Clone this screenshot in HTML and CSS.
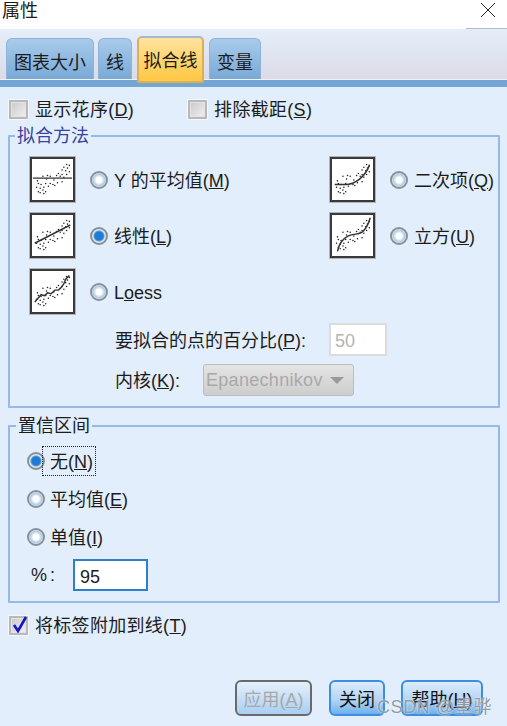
FILE: index.html
```html
<!DOCTYPE html>
<html lang="zh-CN">
<head>
    <meta charset="UTF-8">
    <meta name="viewport" content="width=device-width, initial-scale=1.0">
    <title>属性</title>
    <link rel="stylesheet" href="styles.css">
</head>
<body>
    <svg class="defs" width="0" height="0">
        <defs>
            <path id="dots" d="M38 6h0M41 7h0M35 9h0M39 10h0M33 12h0M37 13h0M41 14h0M29 16h0M33 17h0M38 17h0M12 19h0M17 18h0M20 19h0M27 18h0M31 19h0M35 20h0M7 27h0M10 28h0M15 27h0M20 27h0M23 28h0M28 26h0M33 25h0M5 31h0M9 32h0M13 31h0M18 30h0M25 29h0M7 36h0M12 34h0M15 36h0M9 37h0M13 38h0M6 24h0M16 22h0M24 23h0"/>
        </defs>
    </svg>
    <div class="dialog">
        <div class="titlebar">
            <span class="title">属性</span>
            <svg class="close" width="16" height="16" viewBox="0 0 16 16"><path d="M1 1L15 15M15 1L1 15"/></svg>
        </div>
        <div class="tabs">
            <div class="tab">图表大小</div>
            <div class="tab">线</div>
            <div class="tab active">拟合线</div>
            <div class="tab">变量</div>
        </div>
        <div class="panel">
            <div class="checks">
                <label class="check-item"><span class="checkbox"></span><span>显示花序(<u>D</u>)</span></label>
                <label class="check-item"><span class="checkbox"></span><span>排除截距(<u>S</u>)</span></label>
            </div>

            <fieldset class="group">
                <legend class="blue">拟合方法</legend>
                <div class="methods">
                    <div class="method">
                        <svg class="thumb" viewBox="0 0 45 45"><use href="#dots"/><path class="fit" d="M1 21H44"/></svg>
                        <span class="radio"></span><span class="method-text">Y 的平均值(<u>M</u>)</span>
                    </div>
                    <div class="method">
                        <svg class="thumb" viewBox="0 0 45 45"><use href="#dots"/><path class="fit" d="M3 28H15C25 28 36 20 41 7"/></svg>
                        <span class="radio"></span><span class="method-text">二次项(<u>Q</u>)</span>
                    </div>
                    <div class="method">
                        <svg class="thumb" viewBox="0 0 45 45"><use href="#dots"/><path class="fit" d="M3 31L42 11"/></svg>
                        <span class="radio on"></span><span class="method-text">线性(<u>L</u>)</span>
                    </div>
                    <div class="method">
                        <svg class="thumb" viewBox="0 0 45 45"><use href="#dots"/><path class="fit" d="M6 40C8 30 12 26 18 23S30 22 34 18S40 10 42 3"/></svg>
                        <span class="radio"></span><span class="method-text">立方(<u>U</u>)</span>
                    </div>
                    <div class="method">
                        <svg class="thumb" viewBox="0 0 45 45"><use href="#dots"/><path class="fit" d="M3 34L10 26L14 27L17 24L21 25L25 21L29 21L32 18L35 14L37 9L41 5"/></svg>
                        <span class="radio"></span><span class="method-text">L<u>o</u>ess</span>
                    </div>
                </div>
                <div class="param">
                    <span class="param-label wide">要拟合的点的百分比(<u>P</u>):</span>
                    <span class="field disabled">50</span>
                </div>
                <div class="param">
                    <span class="param-label">内核(<u>K</u>):</span>
                    <span class="select">Epanechnikov<i class="arrow"></i></span>
                </div>
            </fieldset>

            <fieldset class="group second">
                <legend>置信区间</legend>
                <div class="option"><span class="radio on"></span><span class="option-text focused">无(<u>N</u>)</span></div>
                <div class="option"><span class="radio"></span><span class="option-text">平均值(<u>E</u>)</span></div>
                <div class="option"><span class="radio"></span><span class="option-text">单值(<u>I</u>)</span></div>
                <div class="percent">
                    <span class="percent-label">%:</span>
                    <span class="field">95</span>
                </div>
            </fieldset>

            <label class="check-item attach"><span class="checkbox checked"><svg width="17" height="17" viewBox="0 0 17 17"><path d="M3 9L7 15L15 1"/></svg></span><span>将标签附加到线(<u>T</u>)</span></label>

            <div class="actions">
                <button class="btn apply">应用(<u>A</u>)</button>
                <button class="btn close-btn">关闭</button>
                <button class="btn help">帮助(<u>H</u>)</button>
            </div>
        </div>
        <div class="watermark">CSDN @墨骅</div>
    </div>
</body>
</html>
```

FILE: styles.css
```css
* {
    box-sizing: border-box;
}
body {
    margin: 0;
    font-family: "Liberation Sans", "Noto Sans CJK SC", sans-serif;
    font-size: 18px;
    line-height: 20px;
    color: #1c1c1c;
    background: #e2eefb;
}
.defs {
    position: absolute;
}
.dialog {
    position: relative;
    width: 507px;
    height: 726px;
    display: flex;
    flex-direction: column;
    overflow: hidden;
}
.titlebar {
    position: relative;
    height: 29px;
    flex: none;
    padding: 0 11px 0 2px;
    background: #fff;
    display: flex;
    justify-content: space-between;
    align-items: flex-start;
}
.titlebar::after {
    content: "";
    position: absolute;
    right: 0;
    bottom: 0;
    width: 41px;
    height: 1px;
    background: #b4bcc8;
}
.title {
    line-height: 22px;
}
.close {
    margin-top: 2px;
}
.close path {
    fill: none;
    stroke: #222;
    stroke-width: 1;
}
.tabs {
    height: 58px;
    flex: none;
    display: flex;
    gap: 4px;
    padding-left: 6px;
    border-bottom: 7px solid #75a5d2;
    background: linear-gradient(#e4eefa, #dbdbe7);
    box-shadow: inset 0 -1px 0 #f2f2f6;
}
.tab {
    height: 41px;
    margin-top: 9px;
    padding: 14px 7px 0;
    border: 1px solid #8db3da;
    border-bottom: none;
    border-radius: 6px 6px 0 0;
    background: linear-gradient(#a9cbea, #78a9d6);
}
.tab.active {
    height: 47px;
    margin: 7px 1px 0;
    padding: 13px 4.5px 0;
    border: 2px solid #d9b054;
    border-top-color: #a7b9c9;
    border-radius: 5px 5px 2px 2px;
    background: linear-gradient(#ffe3a0, #ffc743);
}
.panel {
    flex: 1;
    display: flex;
    flex-direction: column;
    padding: 12px 7px 10px 8px;
}
.checks {
    display: flex;
    gap: 54px;
    height: 20px;
    padding-left: 1px;
}
.check-item {
    display: flex;
    align-items: center;
    gap: 7px;
}
.check-item span:last-child {
    padding-top: 2px;
    letter-spacing: 0.3px;
}
.check-item .checkbox:last-child {
    padding-top: 0;
}
.checkbox {
    width: 19px;
    height: 19px;
    flex: none;
    border: 2px solid #b9b9b9;
    outline: 1px solid #f4f7fb;
    background: linear-gradient(135deg, #c9c9c9, #f1f1f1);
    box-shadow: inset 0 0 0 1px #e4e4e4;
}
.checkbox svg {
    display: block;
    margin: -2px 0 0 0;
}
.checkbox path {
    fill: none;
    stroke: #1414c8;
    stroke-width: 2.6;
}
.group {
    margin: 7px 0 0;
    padding: 11px 0 10px 20px;
    border: 2px solid #96bae3;
    border-radius: 1px;
    min-width: 0;
}
.group legend {
    margin-left: -15px;
    padding: 0 2px;
}
.blue {
    color: #38439c;
}
.methods {
    display: grid;
    grid-template-columns: 300px 1fr;
    row-gap: 11px;
}
.method {
    display: flex;
    align-items: center;
}
.method-text {
    padding-top: 3px;
}
.thumb {
    width: 45px;
    height: 45px;
    margin-right: 15px;
    background: #fff;
    border: 2px solid #3a3a3a;
    outline: 1px solid #b4b4b4;
}
.thumb use {
    fill: none;
    stroke: #222;
    stroke-width: 1.7;
    stroke-linecap: round;
}
.thumb .fit {
    fill: none;
    stroke: #333;
    stroke-width: 1.6;
}
.radio {
    width: 18px;
    height: 18px;
    flex: none;
    margin-right: 6px;
    border: 2px solid #8b8f93;
    border-radius: 50%;
    background: radial-gradient(circle, #fff 0 3px, #d7e7f7 4px, #a9cbe8 6px, #eef5fc 7px);
}
.radio.on {
    background: radial-gradient(circle, #1f7ad6 0 4px, #5b9fe0 5px, #dbe9f7 6px);
}
.param {
    display: flex;
    align-items: center;
    margin: 9px 0 0 85px;
}
.param + .param {
    margin-top: 8px;
}
.param-label {
    width: 88px;
    flex: none;
    padding-top: 2px;
}
.param-label.wide {
    width: 214px;
}
.field {
    display: block;
    height: 33px;
    width: 58px;
    padding: 6px 4px;
    border: 2px solid #fff;
    background: #fff;
}
.field.disabled {
    border-color: #dcdcdc;
    color: #b4b4b4;
}
.select {
    width: 151px;
    height: 32px;
    display: flex;
    align-items: center;
    justify-content: space-between;
    padding: 0 9px 0 2px;
    border: 1px solid #bdbdbd;
    border-radius: 3px;
    letter-spacing: 0.3px;
    color: #a9a9a9;
    background: linear-gradient(#e4e4e4, #cdcdcd);
}
.arrow {
    width: 0;
    height: 0;
    border: 7px solid transparent;
    border-top: 7px solid #9a9a9a;
    border-bottom: none;
}
.second {
    padding: 10px 0 10px 17px;
    margin-top: 8px;
}
.second legend {
    margin-left: -11px;
}
.option {
    display: flex;
    align-items: center;
    height: 30px;
    margin-bottom: 8px;
}
.option .radio {
    margin-right: 0;
}
.option-text {
    padding: 2px 2px 0 4px;
    border: 1px dotted transparent;
    line-height: 26px;
}
.option-text.focused {
    margin-left: -3px;
    padding-left: 7px;
    border-color: #222;
}
.percent {
    display: flex;
    align-items: center;
    margin-left: 4px;
    margin-top: -1px;
}
.percent-label {
    width: 42px;
    letter-spacing: 3px;
}
.percent .field {
    width: 75px;
    height: 32px;
    padding: 6px 5px;
    border: 2px solid #2f7fcc;
}
.attach {
    margin: 11px 0 0 1px;
}
.actions {
    margin-top: auto;
    display: flex;
    gap: 16px;
    padding-right: 17px;
    justify-content: flex-end;
}
.btn {
    height: 36px;
    padding: 3px 0 0;
    font: inherit;
    color: #111;
    border: 2px solid #3c8ee0;
    border-radius: 6px;
    background: linear-gradient(#dcecfb, #b4d5f5 55%, #6fb0ee);
}
.btn.apply {
    width: 77px;
    margin-right: 1px;
    color: #a8a8a8;
    border-color: #6a6a6a;
    background: linear-gradient(#e5f0fb, #a9cff3);
}
.close-btn {
    width: 56px;
}
.help {
    width: 82px;
}
.watermark {
    position: absolute;
    right: 15px;
    top: 697px;
    letter-spacing: 0.6px;
    color: rgba(135, 145, 155, 0.9);
    text-shadow: 0 0 2px #fff;
}
```
